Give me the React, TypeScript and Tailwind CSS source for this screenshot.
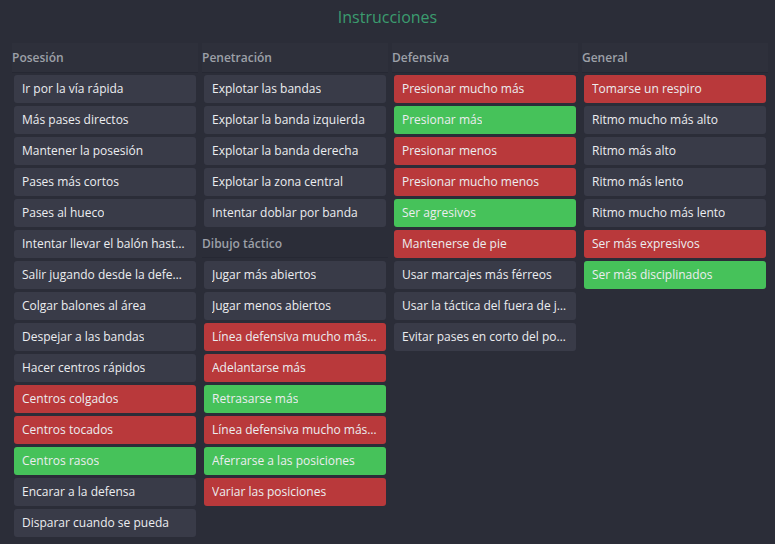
import React from "react";

type Tone = "n" | "r" | "g";
type Item = [string, Tone];

const posesion: Item[] = [
  ["Ir por la vía rápida", "n"],
  ["Más pases directos", "n"],
  ["Mantener la posesión", "n"],
  ["Pases más cortos", "n"],
  ["Pases al hueco", "n"],
  ["Intentar llevar el balón hasta el área", "n"],
  ["Salir jugando desde la defensa", "n"],
  ["Colgar balones al área", "n"],
  ["Despejar a las bandas", "n"],
  ["Hacer centros rápidos", "n"],
  ["Centros colgados", "r"],
  ["Centros tocados", "r"],
  ["Centros rasos", "g"],
  ["Encarar a la defensa", "n"],
  ["Disparar cuando se pueda", "n"],
];

const penetracion: Item[] = [
  ["Explotar las bandas", "n"],
  ["Explotar la banda izquierda", "n"],
  ["Explotar la banda derecha", "n"],
  ["Explotar la zona central", "n"],
  ["Intentar doblar por banda", "n"],
];

const dibujo: Item[] = [
  ["Jugar más abiertos", "n"],
  ["Jugar menos abiertos", "n"],
  ["Línea defensiva mucho más adelantada", "r"],
  ["Adelantarse más", "r"],
  ["Retrasarse más", "g"],
  ["Línea defensiva mucho más retrasada", "r"],
  ["Aferrarse a las posiciones", "g"],
  ["Variar las posiciones", "r"],
];

const defensiva: Item[] = [
  ["Presionar mucho más", "r"],
  ["Presionar más", "g"],
  ["Presionar menos", "r"],
  ["Presionar mucho menos", "r"],
  ["Ser agresivos", "g"],
  ["Mantenerse de pie", "r"],
  ["Usar marcajes más férreos", "n"],
  ["Usar la táctica del fuera de juego", "n"],
  ["Evitar pases en corto del portero", "n"],
];

const general: Item[] = [
  ["Tomarse un respiro", "r"],
  ["Ritmo mucho más alto", "n"],
  ["Ritmo más alto", "n"],
  ["Ritmo más lento", "n"],
  ["Ritmo mucho más lento", "n"],
  ["Ser más expresivos", "r"],
  ["Ser más disciplinados", "g"],
];

function Btn({ label, tone }: { label: string; tone: Tone }) {
  const cls =
    tone === "r"
      ? "bg-[#b9393b]"
      : tone === "g"
      ? "bg-[#46c25a]"
      : "bg-[#393b48]";
  return (
    <div
      className={`${cls} mx-[2px] h-[28px] rounded-[3px] flex items-center pl-[8px] pr-[9px] text-[12px] text-[#ecedf0] whitespace-nowrap overflow-hidden`}
    >
      <span className="truncate">{label}</span>
    </div>
  );
}

function Header({ title }: { title: string }) {
  return (
    <div className="h-[30px] flex items-center pt-[1px] border-b border-[#262833] bg-[#2e303b] text-[12px] font-semibold text-[#9da0a8]">
      {title}
    </div>
  );
}

function SubHeader({ title }: { title: string }) {
  return (
    <div className="h-[28px] flex items-center border-b border-[#262833] text-[12px] font-semibold text-[#9da0a8] -mb-[1px]">
      {title}
    </div>
  );
}

function List({ items }: { items: Item[] }) {
  return (
    <div className="flex flex-col gap-[3px]">
      {items.map(([l, t]) => (
        <Btn key={l} label={l} tone={t} />
      ))}
    </div>
  );
}

export default function App() {
  return (
    <div
      className="w-[775px] h-[544px] bg-[#2b2d38] overflow-hidden"
      style={{ fontFamily: '"Open Sans", "Noto Sans", sans-serif' }}
    >
      <div className="h-[43px] flex justify-center pt-[5px]">
        <div className="text-[16px] text-[#3b9c6f] leading-[24px]">Instrucciones</div>
      </div>
      <div className="flex gap-[4px] pl-[12px]">
        <div className="w-[186px]">
          <Header title="Posesión" />
          <div className="mt-[2px]">
            <List items={posesion} />
          </div>
        </div>
        <div className="w-[186px]">
          <Header title="Penetración" />
          <div className="mt-[2px] flex flex-col gap-[3px]">
            <List items={penetracion} />
            <SubHeader title="Dibujo táctico" />
            <div className="mt-[1px]">
              <List items={dibujo} />
            </div>
          </div>
        </div>
        <div className="w-[186px]">
          <Header title="Defensiva" />
          <div className="mt-[2px]">
            <List items={defensiva} />
          </div>
        </div>
        <div className="w-[186px]">
          <Header title="General" />
          <div className="mt-[2px]">
            <List items={general} />
          </div>
        </div>
      </div>
    </div>
  );
}
